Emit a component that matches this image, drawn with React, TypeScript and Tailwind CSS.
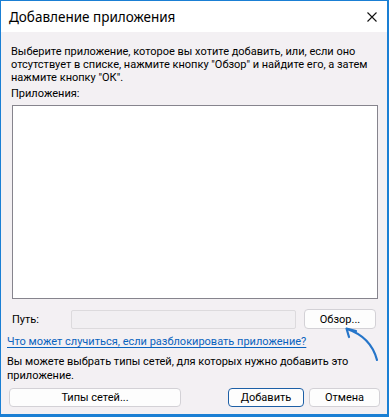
export default function App() {
  return (
    <div className="relative w-[389px] h-[417px] overflow-hidden font-['Roboto',sans-serif] text-black">
      <div className="flex flex-col w-[389px] h-[417px] border-[#1a7fd4] border-l border-t border-r-2 border-b-[3px] bg-[#f3f0f3] text-[11px]">
        <div className="h-[31px] shrink-0 bg-white flex items-center justify-between pl-[8px] pr-[10px]">
          <span className="text-[13.5px] leading-[16px] font-['Noto_Sans',sans-serif]">Добавление приложения</span>
          <svg width="10" height="10" viewBox="0 0 10 10" className="block">
            <path d="M0.5 0.5 L9.5 9.5 M9.5 0.5 L0.5 9.5" stroke="#111" strokeWidth="1.1" fill="none" />
          </svg>
        </div>
        <p className="mt-[13px] ml-[10px] leading-[13px]">
          Выберите приложение, которое вы хотите добавить, или, если оно
          <br />
          отсутствует в списке, нажмите кнопку "Обзор" и найдите его, а затем
          <br />
          нажмите кнопку "ОК".
        </p>
        <p className="mt-[3px] ml-[10px] leading-[13px]">Приложения:</p>
        <div className="mt-[5px] ml-[11px] w-[366px] h-[194px] shrink-0 bg-white border border-[#86848d]" />
        <div className="mt-[10px] h-[20px] flex items-center ml-[11px]">
          <span className="w-[59px] leading-[13px]">Путь:</span>
          <div className="w-[225px] h-[19px] bg-[#f1eff2] border border-[#dcdadd] rounded-[2px]" />
          <button className="ml-[8px] w-[72px] h-[20px] bg-[#fdfdfd] border border-[#d3d1d6] rounded-[4px] text-[11px] leading-[13px]">
            Обзор...
          </button>
        </div>
        <a className="mt-[6px] ml-[6px] leading-[14px] text-[#0a63be] underline underline-offset-[2px] decoration-[#0a63be]">
          Что может случиться, если разблокировать приложение?
        </a>
        <p className="mt-[6px] ml-[6px] leading-[14px]">
          Вы можете выбрать типы сетей, для которых нужно добавить это
          <br />
          приложение.
        </p>
        <div className="mt-[5px] flex items-center ml-[8px]">
          <button className="w-[172px] h-[19px] bg-[#fdfdfd] border border-[#d3d1d6] rounded-[4px] text-[11px] leading-[13px]">
            Типы сетей...
          </button>
          <button className="ml-[47px] w-[76px] h-[19px] bg-[#fdfdfd] border border-[#1d5fa6] rounded-[4px] text-[11px] leading-[13px]">
            Добавить
          </button>
          <button className="ml-[5px] w-[71px] h-[19px] bg-[#fdfdfd] border border-[#d3d1d6] rounded-[4px] text-[11px] leading-[13px]">
            Отмена
          </button>
        </div>
      </div>
      <svg className="absolute inset-0 pointer-events-none" width="389" height="417" viewBox="0 0 389 417">
        <path d="M377 360 Q371 337 347 329" stroke="#2575c9" strokeWidth="2.2" fill="none" strokeLinecap="round" />
        <path d="M356 331 L346.5 328.5 L349 337" stroke="#2575c9" strokeWidth="2.2" fill="none" strokeLinecap="round" strokeLinejoin="round" />
      </svg>
    </div>
  );
}
